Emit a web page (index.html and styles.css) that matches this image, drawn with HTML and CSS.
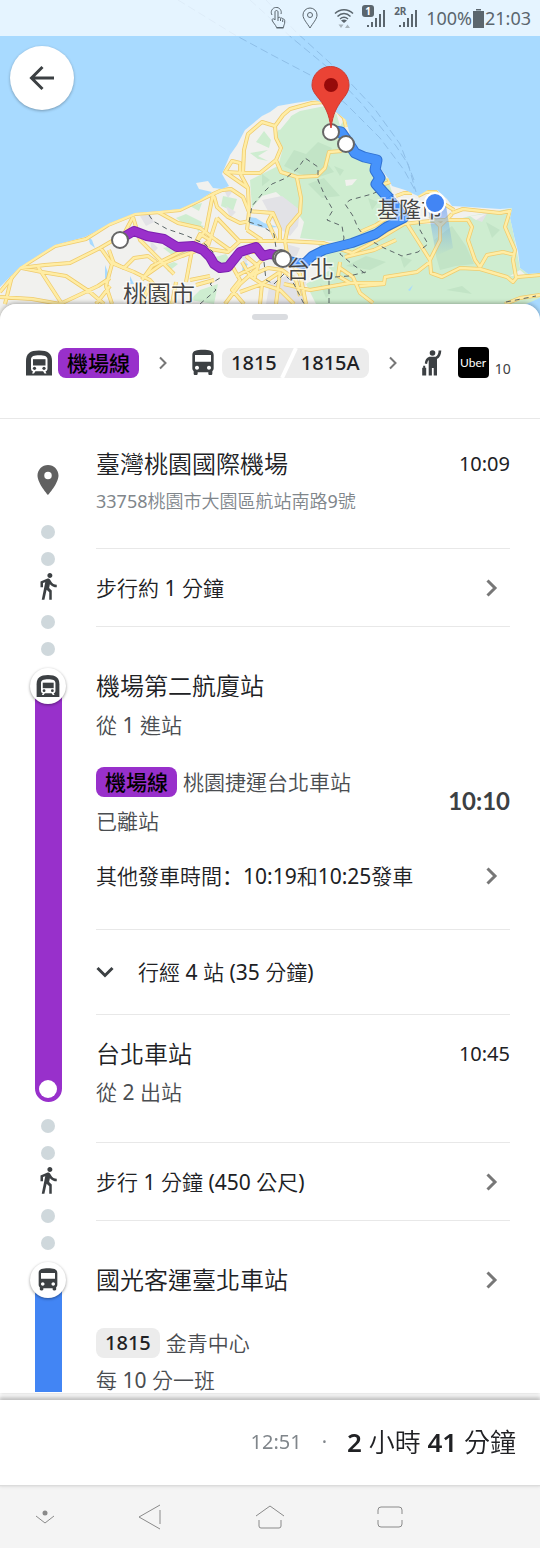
FILE: index.html
```html
<!DOCTYPE html>
<html lang="zh-Hant">
<head>
    <meta charset="UTF-8">
    <meta name="viewport" content="width=device-width, initial-scale=1.0">
    <title>路線詳細資料</title>
    <link rel="stylesheet" href="styles.css">
</head>
<body>
    <!-- Shared icons -->
    <svg class="sprite" aria-hidden="true">
        <symbol id="i-bus" viewBox="0 0 24 24">
            <path d="M4 16c0 .88.39 1.67 1 2.22V20c0 .55.45 1 1 1h1c.55 0 1-.45 1-1v-1h8v1c0 .55.45 1 1 1h1c.55 0 1-.45 1-1v-1.78c.61-.55 1-1.34 1-2.22V6c0-3.5-3.58-4-8-4s-8 .5-8 4v10zm3.5 1c-.83 0-1.5-.67-1.5-1.5S6.67 14 7.5 14s1.5.67 1.5 1.5S8.33 17 7.5 17zm9 0c-.83 0-1.5-.67-1.5-1.5s.67-1.5 1.5-1.5 1.5.67 1.5 1.5-.67 1.5-1.5 1.5zm1.5-6H6V6h12v5z"/>
        </symbol>
        <symbol id="i-train" viewBox="0 0 32 32">
            <path d="M3 28.500V14C3 6.500 7 3.500 16 3.500s13 3 13 10.500v14.500z"/>
            <path fill="#fff" d="M8 12.500c0-3.500 3-4.300 8.200-4.300s8.300.8 8.300 4.300v9c0 1.500-.8 2.600-2 2.900l1 2h-2l-1.400-2.200h-7.700L11 26.400H9l1-2c-1.200-.3-2-1.400-2-2.900z"/>
            <path d="M10 12.200h12.500v6.300H10z"/>
            <circle cx="11.500" cy="21.300" r="1.600"/>
            <circle cx="21" cy="21.300" r="1.600"/>
        </symbol>
        <symbol id="i-walk" viewBox="0 0 24 24">
            <path d="M13.500 5.500c1.100 0 2-.9 2-2s-.9-2-2-2-2 .9-2 2 .9 2 2 2zM9.800 8.900L7 23h2.100l1.800-8 2.100 2v6h2v-7.500l-2.100-2 .6-3C14.800 12 16.800 13 19 13v-2c-1.900 0-3.500-1-4.300-2.400l-1-1.600c-.4-.6-1-1-1.700-1-.3 0-.5.1-.8.1L6 8.300V13h2V9.600l1.800-.7"/>
        </symbol>
        <symbol id="i-hail" viewBox="0 0 32 32">
            <circle cx="15.500" cy="6" r="2.800"/>
            <path d="M24.300 3.400l-2.700.2c0 3-1 5-3 6.200h-5.200c-3 0-5 2.200-5.600 6.700l2.300.5c.3-2 .8-3.200 1.600-4v15.500h3.200V21h1.800v7.500H20V12c2.800-1.500 4.200-4.500 4.300-8.600z"/>
            <path d="M5.200 20.700h1v-2h2v2h1v7.800h-4z"/>
        </symbol>
        <symbol id="i-pin" viewBox="0 0 24 24">
            <path d="M12 2C8.130 2 5 5.130 5 9c0 5.250 7 13 7 13s7-7.750 7-13c0-3.870-3.130-7-7-7zm0 9.500a2.500 2.500 0 010-5 2.500 2.500 0 010 5z"/>
        </symbol>
        <symbol id="i-next" viewBox="0 0 12 18">
            <path d="M1.500 1.500L9 9l-7.500 7.500" fill="none" stroke="currentColor" stroke-width="3"/>
        </symbol>
        <symbol id="i-sep" viewBox="0 0 8 14">
            <path d="M1 1.500L6.500 7 1 12.500" fill="none" stroke="currentColor" stroke-width="2"/>
        </symbol>
        <symbol id="i-signal" viewBox="0 0 20 18">
            <path d="M1 16h2v2H1zM5 13h2v5H5zM9 9h2v9H9zM13 5h2v13h-2zM17 1h2v17h-2z"/>
        </symbol>
    </svg>

    <header class="map">
        <svg class="map-canvas" viewBox="0 0 540 320" preserveAspectRatio="xMidYMin slice" role="img" aria-label="路線地圖">
            <defs>
                <path id="land" d="M0 287L20 267 42 253 55 245 85 237 93 233 110 223 135 213 160 211 180 209 200 200 212 192 199 189 196 183 208 181 213 188 222 189 229 186 222 174 230 155 237 145 245 130 262 116 270 112 278 106 295 103 315 100 325 104 337 113 346 120 350 135 350 142 357 152 372 157 380 168 388 178 392 186 405 190 418 196 428 190 437 190 447 199 452 206 470 207 500 209 512 208 510 218 514 236 518 252 520 268 528 274 540 273V320H0z"/>
                <g id="roads">
                    <path d="M0 292L20 268 55 246 86 239 108 225 135 214 160 212 180 210 213 194 222 190 231 189 243 197 249 212 247 230"/>
                    <path d="M20 268L45 265 70 263 100 248 124 234 133 217M22 268L42 272 66 276 90 292 104 304M38 267L62 304M0 297L32 299 60 304M12 276L5 304M60 304L98 286 110 278M100 247L112 264 106 286 112 304M110 286L96 304M109 250L114 264 134 272 150 280 170 304"/>
                    <path d="M133 217L140 240 160 260 174 274M142 280L152 266 176 254 192 246M112 262L124 268 134 258 148 256 156 262M158 212L178 223 200 228 216 240 230 250M142 278L162 264 182 256 204 248 228 252 240 241 287 241 323 243 352 253"/>
                    <path d="M213 194L206 230 196 242 200 234 210 240 202 246M214 196L217 207 228 217 240 223 250 221M217 218L208 246M217 218L240 242M192 250L186 282M196 285L214 280M225 304L240 284 258 268M230 262L240 280 232 290 244 304M150 283L142 304M176 282L172 304M190 280L210 276"/>
                    <path d="M346 127L344 118 333 106 324 102 312 103 290 109 283 115 275 126 262 122 248 134 244 150 243 173 225 172 232 161 240 163 240 173 248 188 249 213M225 172L248 188M275 126L276 138 281 148 276 160 281 172 297 177 317 176 325 168 329 152 342 151M243 173L260 173 276 160"/>
                    <path d="M297 178L301 198 300 213 288 227 285 241M248 211L273 213 280 229 280 241M272 214L268 222 276 240M247 230L262 240M285 241L288 260 300 274 306 304M240 252L262 252 284 254M242 262L250 276 262 284 260 304M236 276L256 266 266 256M250 276L268 268 282 270 296 280 300 296M240 292L262 284 280 272M280 272L276 304M262 284L280 290 294 304M246 256L258 266 254 280M284 284L310 290 350 283 383 283"/>
                    <path d="M340 268L353 277 360 293 373 303M352 253L366 246 384 236 404 224 420 222 442 220 468 220 472 227 468 240 475 260 480 267M345 257L374 250 396 240M360 232L376 225 390 216M340 262L338 276 350 283"/>
                    <path d="M406 222L430 260 431 273 442 277 460 268 480 269 507 277 513 282 517 277 540 275M430 260L440 240 440 224 432 220M430 262L417 272 385 277 384 284 360 286M480 267L487 255 503 252 515 255M452 213L463 209 500 213 510 211 505 227 515 250 513 260 516 277M396 196L404 193 412 193M418 196L426 192 436 192 444 204 454 210M388 178L390 182 384 184M430 216L440 226 452 214M505 304L520 298 540 295"/>
                </g>
                <linearGradient id="beam" x1="0" y1="0" x2="0" y2="1">
                    <stop offset="0" stop-color="#4285f4" stop-opacity=".5"/>
                    <stop offset="1" stop-color="#4285f4" stop-opacity="0"/>
                </linearGradient>
                <clipPath id="shore"><use href="#land"/></clipPath>
            </defs>
            <rect width="540" height="320" fill="#a8daff"/>
            <g fill="none" stroke="#8fbfe8" stroke-dasharray="8 4">
                <path d="M178 0L235 35 272 55 312 76 346 104 380 138 404 170 416 192M250 0L292 38 326 66 362 104 396 146 408 164 416 192M266 0L296 32 340 72 374 108 400 144 414 180"/>
            </g>
            <use href="#land" fill="#f1f1ee"/>
            <g clip-path="url(#shore)">
                <g fill="#ceedd0">
                    <path d="M284 120L300 111 325 106 342 118 348 142 358 156 372 160 388 180 392 192 384 206 396 222 376 234 340 242 318 240 300 238 304 222 292 206 276 192 262 196 252 208 250 180 262 174 278 166 283 148 276 134z"/>
                    <path d="M318 244L352 240 384 226 404 224 440 224 470 216 512 208 514 236 520 268 540 273V304H316L306 284 330 270z"/>
                    <path d="M256 142L264 131 271 140 269 148zM250 153L268 150 258 156 268 161 258 159zM223 196L237 199 233 211 221 206zM190 206L202 203 199 211zM176 218L186 214 202 222 200 228 184 224zM163 248L181 244 186 252 176 258zM166 265L174 262 178 264 168 272zM212 258L226 254 230 260 222 268zM190 300L200 290 218 284 214 304zM196 224L204 226 198 232z"/>
                </g>
                <g fill="#c2e4c6">
                    <path d="M284 166L294 150 306 154 318 142 332 148 326 162 334 172 316 178 300 174zM308 184L324 178 340 196 322 198zM334 166L344 170 340 176zM346 266L366 256 386 262 370 270zM434 240L452 226 466 246 474 264 456 266 440 270 436 256zM486 222L500 230 492 238zM400 256L412 260 404 268zM446 290L462 286 472 294zM320 284L332 292 326 298zM262 174L270 180 262 186zM330 128L338 132 332 138zM368 198L378 202 372 210z"/>
                </g>
                <g fill="#e2e2e6">
                    <path d="M262 200L282 196 300 210 298 226 290 236 276 226zM270 282L292 274 306 282 302 304 266 304zM140 216L150 214 154 222 146 226zM236 250L250 254 246 264zM292 262L306 266 304 276zM226 206L236 212 230 218zM150 240L158 248 152 254zM222 186L232 192 228 198zM396 200L410 202 404 214zM472 218L488 212 482 222zM286 244L300 248 294 262z"/>
                </g>
                <path fill="#f1f1ee" d="M274 128L284 116 294 110 290 118 280 130zM345 180L357 179 352 185 346 186zM336 112L344 120 340 126zM470 216L486 214 476 220zM510 276L520 270 526 275z"/>
                <path fill="#a8daff" d="M249 217L256 218 264 223 278 227 264 228 249 224zM88 236L92 240 95 248 90 244zM105 265L109 275 107 289 105 280zM130 276L134 284 130 284zM243 262L248 264 242 274zM408 290L413 285 410 291zM526 304L540 298V320H526z"/>
                <g fill="none" stroke-linejoin="round">
                    <use href="#roads" stroke="#efcb6d" stroke-width="4"/>
                    <use href="#roads" stroke="#ffeda5" stroke-width="2.500"/>
                </g>
                <g fill="none" stroke="#5c6668" stroke-dasharray="5 4">
                    <path d="M149 215L153 221 167 229 185 235 205 244 213 252 211 260M249 222L252 206 262 194 272 184 286 178 298 168 305 158 318 167 318 180 325 196 333 210 327 220 342 226 344 238 340 254 352 264 366 274M249 222L262 226 274 234 276 248M386 188L372 194 350 200 345 204 353 216 358 228 366 238M366 238L384 248 402 256 418 252 428 244 420 230 419 218M335 277L349 276 366 272M200 304L216 290 210 284 220 278M264 262L266 280 274 284 284 274 294 284 304 304M329 280V304M506 302L536 296"/>
                </g>
            </g>
            <path d="M428 208L446 206 453 248 436 256z" fill="url(#beam)"/>
            <g fill="none" stroke-linejoin="round">
                <path stroke="#7c1fb0" stroke-width="10" d="M120 240L127 235 134 231 147 236 164 239 177 247 193 246 203 250 210 257 214 264 220 268 228 267 236 257 240 252 256 247 263 256 270 254 282 256"/>
                <path stroke="#9a30cb" stroke-width="8" d="M120 240L127 235 134 231 147 236 164 239 177 247 193 246 203 250 210 257 214 264 220 268 228 267 236 257 240 252 256 247 263 256 270 254 282 256"/>
                <path stroke="#2f70d0" stroke-width="11" d="M334 131L341 132 348 142 355 153 364 157 377 160 375 170 380 178 376 184 384 193 390 199"/>
                <path stroke="#4793fb" stroke-width="9" d="M334 131L341 132 348 142 355 153 364 157 377 160 375 170 380 178 376 184 384 193 390 199"/>
                <path stroke="#2f70d0" stroke-width="10" d="M388 198L394 204 404 218 386 227 376 234 352 243 324 250 312 256 304 264 282 260"/>
                <path stroke="#4793fb" stroke-width="8" d="M388 198L394 204 404 218 386 227 376 234 352 243 324 250 312 256 304 264 282 260"/>
            </g>
            <g class="map-label">
                <text x="123" y="303" font-size="24">桃園市</text>
                <text x="286" y="278" font-size="24">台北</text>
                <text x="377" y="217" font-size="22">基隆市</text>
            </g>
            <g fill="#fff" stroke="#666" stroke-width="2">
                <circle cx="120" cy="240" r="8"/>
                <circle cx="281" cy="258" r="8"/>
                <circle cx="283" cy="259" r="8"/>
                <circle cx="346" cy="144" r="8"/>
                <circle cx="331" cy="132" r="8"/>
            </g>
            <circle cx="435" cy="203" r="10" fill="#4285f4" stroke="#fff" stroke-width="2"/>
            <path fill="#ea4335" stroke="#cf3a2f" d="M331 128c-2-15-6-21-11-28-4-5-8-9-8-15a18.500 18.500 0 0137 0c0 6-3 10-7 15-5 7-9 13-11 28z"/>
            <circle cx="331" cy="85" r="7" fill="#960a0a"/>
        </svg>

        <div class="status-bar">
            <svg width="16" height="22" viewBox="0 0 16 22" fill="none" stroke="currentColor">
                <path d="M2 8a5 5 0 119-1M5 13V5c0-2 3-2 3 0v6c1-1 2.500-1 2.500.5 1-1 2.200-.6 2.200.8 1-.6 2 0 2 1.200V16c0 1-1 2-1.200 4.500H6.500C6 18 3 16 2 13c0-1 1.500-2 3 0M6.500 21h7M8 11v3M10.500 12v2M12.700 13v2"/>
            </svg>
            <svg class="place" width="16" height="22" viewBox="0 0 16 22" fill="none" stroke="currentColor">
                <path d="M8 21C5 16 1 12 1 8a7 7 0 0114 0c0 4-4 8-7 13z"/>
                <circle cx="8" cy="8" r="2.500"/>
            </svg>
            <svg width="20" height="20" viewBox="0 0 20 20" fill="none" stroke="currentColor" stroke-width="1.500">
                <path d="M1 5.500c5-5 13-5 18 0M3.500 8.500c4-4 9-4 13 0M6 11c3-2.500 5-2.500 8 0"/>
                <path d="M7 12.500c2-1.300 4-1.300 6 0L10 15z" fill="currentColor" stroke="none"/>
                <path d="M4.500 16.500h5L7 20zM11 20h5l-2.500-3.500z" fill="#a9b4bc" stroke="none"/>
            </svg>
            <span class="sim"><b class="sim-badge">1</b><svg width="20" height="18"><use href="#i-signal"/></svg></span>
            <span class="sim"><b class="sim-tag">2R</b><svg width="20" height="18"><use href="#i-signal"/></svg></span>
            <span class="battery">100%<svg width="11" height="19" viewBox="0 0 11 19"><path d="M3 0h5v1.500H3zM0 2h11v17H0z"/></svg>21:03</span>
        </div>

        <button class="back" aria-label="返回">
            <svg width="26" height="26" viewBox="0 0 26 26" fill="none" stroke="currentColor" stroke-width="3">
                <path d="M13.500 2L2.500 13l11 11M2.500 13H25"/>
            </svg>
        </button>
    </header>

    <main class="sheet">
        <div class="handle"></div>

        <section class="summary">
            <span class="leg">
                <svg class="icon-lg"><use href="#i-train"/></svg>
                <span class="pill pill-metro">機場線</span>
            </span>
            <svg class="sep"><use href="#i-sep"/></svg>
            <span class="leg">
                <svg class="icon-lg"><use href="#i-bus"/></svg>
                <span class="pill">1815<svg class="slash" viewBox="0 0 18 30"><path d="M16 0L2 30" stroke="#fff" stroke-width="4"/></svg>1815A</span>
            </span>
            <svg class="sep"><use href="#i-sep"/></svg>
            <span class="leg">
                <svg class="icon-lg"><use href="#i-hail"/></svg>
                <span class="uber">Uber</span>
                <small>10</small>
            </span>
        </section>

        <ol class="steps">
            <li class="step">
                <div class="rail rail-origin">
                    <svg class="pin"><use href="#i-pin"/></svg>
                    <i class="dot"></i>
                </div>
                <div class="info origin">
                    <div class="row">
                        <h2>臺灣桃園國際機場</h2>
                        <time>10:09</time>
                    </div>
                    <p class="address">33758桃園市大園區航站南路9號</p>
                </div>
            </li>

            <li class="step">
                <div class="rail rail-walk">
                    <i class="dot"></i>
                    <svg class="walker"><use href="#i-walk"/></svg>
                    <i class="dot"></i>
                </div>
                <button class="info walk">步行約 1 分鐘<svg class="next"><use href="#i-next"/></svg></button>
            </li>

            <li class="step">
                <div class="rail rail-ride">
                    <i class="dot"></i>
                    <span class="badge"><svg><use href="#i-train"/></svg></span>
                    <span class="line line-metro"><i class="stop"></i></span>
                    <i class="dot"></i>
                </div>
                <div class="info ride">
                    <h2>機場第二航廈站</h2>
                    <p class="note">從 1 進站</p>
                    <div class="row departure">
                        <div>
                            <p class="route"><span class="pill pill-metro">機場線</span>桃園捷運台北車站</p>
                            <p>已離站</p>
                        </div>
                        <time class="depart-time">10:10</time>
                    </div>
                    <button class="others"><span>其他發車時間<span class="colon" lang="zh-Hans">：</span>10:19和10:25發車</span><svg class="next"><use href="#i-next"/></svg></button>
                    <button class="stops">
                        <svg viewBox="0 0 18 12"><path d="M1.500 2L9 9.500 16.500 2" fill="none" stroke="currentColor" stroke-width="3"/></svg>
                        行經 4 站 (35 分鐘)
                    </button>
                    <div class="arrival">
                        <div class="row">
                            <h2>台北車站</h2>
                            <time>10:45</time>
                        </div>
                        <p>從 2 出站</p>
                    </div>
                </div>
            </li>

            <li class="step">
                <div class="rail rail-walk">
                    <i class="dot"></i>
                    <svg class="walker"><use href="#i-walk"/></svg>
                    <i class="dot"></i>
                </div>
                <button class="info walk">步行 1 分鐘 (450 公尺)<svg class="next"><use href="#i-next"/></svg></button>
            </li>

            <li class="step">
                <div class="rail rail-ride rail-open">
                    <i class="dot"></i>
                    <span class="badge"><svg><use href="#i-bus"/></svg></span>
                    <span class="line line-bus"></span>
                </div>
                <div class="info ride">
                    <div class="row">
                        <h2>國光客運臺北車站</h2>
                        <svg class="next"><use href="#i-next"/></svg>
                    </div>
                    <p class="route bus-route"><span class="pill">1815</span>金青中心</p>
                    <p class="interval">每 10 分一班</p>
                </div>
            </li>
        </ol>
    </main>

    <footer class="total">
        <span class="total-time">12:51</span>
        <span class="total-time">·</span>
        <strong><b>2</b> 小時 <b>41</b> 分鐘</strong>
    </footer>

    <nav class="nav">
        <button aria-label="收合">
            <svg width="20" height="14" viewBox="0 0 20 14"><circle cx="10" cy="3" r="2.500" fill="currentColor" stroke="none"/><path d="M1 6l9 7 9-7"/></svg>
        </button>
        <button aria-label="返回">
            <svg width="24" height="26" viewBox="0 0 24 26"><path d="M22 1L1 13l21 12M22 6v14"/></svg>
        </button>
        <button aria-label="主畫面">
            <svg width="30" height="26" viewBox="0 0 30 26"><path d="M1 12L15 2l14 10M4 16v6q0 2 2 2h18q2 0 2-2v-6"/></svg>
        </button>
        <button aria-label="最近使用">
            <svg width="28" height="22" viewBox="0 0 28 22"><path d="M2 8V4q0-3 3-3h18q3 0 3 3v4M2 14v4q0 3 3 3h18q3 0 3-3v-4"/></svg>
        </button>
    </nav>
</body>
</html>
```
FILE: styles.css
```css
:root {
    --text: #202124;
    --text-soft: #4a4d51;
    --muted: #80868b;
    --icon: #3c4043;
    --line: #e8e8e8;
    --metro: #9830cb;
    --bus: #4285f4;
    --dot: #cfd8dc;
}

* {
    margin: 0;
    padding: 0;
    box-sizing: border-box;
}

body {
    font-family: "Noto Sans", "Noto Sans CJK TC DemiLight", "Noto Sans CJK TC", sans-serif;
    font-size: 21px;
    line-height: 28px;
    color: var(--text);
    background: #fff;
    height: 100vh;
    display: flex;
    flex-direction: column;
}

button {
    border: none;
    background: none;
    font: inherit;
    color: inherit;
    text-align: left;
}

svg {
    flex: none;
    fill: currentColor;
}

.sprite {
    position: absolute;
    width: 0;
    height: 0;
}

/* Map */
.map {
    position: relative;
    flex: none;
}

.map-canvas {
    display: block;
    width: 100%;
    height: 320px;
}

.map-label {
    fill: #444;
    stroke: rgba(255,255,255,0.6);
    stroke-width: 3px;
    paint-order: stroke;
}

.status-bar {
    position: absolute;
    top: 0;
    left: 0;
    right: 0;
    height: 36px;
    padding-right: 9px;
    display: flex;
    align-items: center;
    justify-content: flex-end;
    gap: 8px;
    background: rgba(255,255,255,0.7);
    color: #5b666e;
    font-size: 18px;
}

.place {
    margin: 0 8px;
}

.status-bar svg[fill="none"] {
    fill: none;
}

.sim {
    position: relative;
    padding-left: 4px;
    display: flex;
}

.sim-badge,
.sim-tag {
    position: absolute;
    left: 0;
    top: -4px;
    font-size: 10px;
    line-height: 12px;
    font-weight: 700;
}

.sim-badge {
    width: 12px;
    border-radius: 3px;
    background: #5b666e;
    color: #fff;
    text-align: center;
}

.battery {
    display: flex;
    align-items: center;
    gap: 1px;
}

.back {
    position: absolute;
    top: 46px;
    left: 10px;
    width: 64px;
    height: 64px;
    border-radius: 50%;
    background: #fff;
    box-shadow: 0 1px 3px rgba(0,0,0,0.3);
    color: var(--icon);
    display: flex;
    align-items: center;
    justify-content: center;
}

.back svg {
    fill: none;
}

/* Sheet */
.sheet {
    position: relative;
    flex: 1;
    min-height: 0;
    margin-top: -16px;
    border-radius: 16px 16px 0 0;
    background: #fff;
    box-shadow: 0 -1px 4px rgba(0,0,0,0.3);
    overflow-y: auto;
    scrollbar-width: none;
}

.handle {
    width: 36px;
    height: 6px;
    margin: 10px auto 0;
    border-radius: 3px;
    background: #dadce0;
}

.summary {
    display: flex;
    align-items: center;
    gap: 20px;
    height: 99px;
    padding: 0 23px 13px;
    border-bottom: 1px solid var(--line);
}

.leg {
    display: flex;
    align-items: center;
    gap: 3px;
    color: var(--icon);
}

.icon-lg {
    width: 32px;
    height: 32px;
}

.sep {
    width: 8px;
    height: 14px;
    color: #777;
}

.pill {
    display: inline-flex;
    align-items: center;
    gap: 3px;
    height: 30px;
    padding: 0 9px;
    border-radius: 8px;
    background: #ececec;
    color: var(--text);
    font-family: "Noto Sans", "Noto Sans CJK TC", sans-serif;
    font-size: 20px;
    font-weight: 500;
}

.pill-metro {
    background: var(--metro);
    color: #000;
    font-size: 21px;
}

.slash {
    width: 18px;
    height: 30px;
}

.uber {
    width: 31px;
    height: 31px;
    margin-left: 6px;
    border-radius: 4px;
    background: #000;
    color: #fff;
    font-family: Lato, sans-serif;
    font-size: 12px;
    line-height: 31px;
    text-align: center;
}

.leg small {
    align-self: flex-end;
    margin-left: 3px;
    font-size: 14px;
    line-height: 20px;
}

/* Steps */
.steps {
    list-style: none;
}

.step {
    display: grid;
    grid-template-columns: 96px 1fr;
    padding-right: 30px;
}

.rail {
    display: flex;
    flex-direction: column;
    align-items: center;
    color: var(--icon);
}

.dot {
    flex: none;
    width: 14px;
    height: 14px;
    border-radius: 50%;
    background: var(--dot);
}

.rail-origin {
    padding-top: 43px;
    gap: 27px;
    color: #616161;
}

.pin {
    width: 36px;
    height: 36px;
}

.rail-walk {
    padding-top: 3px;
}

.walker {
    width: 30px;
    height: 30px;
    margin: 5px 0 14px;
}

.rail-ride {
    padding: 13px 0 10px;
}

.rail-open {
    padding-bottom: 0;
}

.badge {
    z-index: 1;
    flex: none;
    width: 36px;
    height: 36px;
    margin-top: 12px;
    border-radius: 50%;
    background: #fff;
    box-shadow: 0 1px 3px rgba(0,0,0,0.4);
    display: flex;
    align-items: center;
    justify-content: center;
}

.badge svg {
    width: 28px;
    height: 28px;
}

.line {
    flex: 1;
    width: 27px;
    margin-top: -18px;
    display: flex;
    align-items: flex-end;
    justify-content: center;
}

.line-metro {
    margin-bottom: 17px;
    padding-bottom: 4px;
    border-radius: 0 0 14px 14px;
    background: var(--metro);
}

.line-bus {
    background: var(--bus);
}

.stop {
    width: 18px;
    height: 18px;
    border-radius: 50%;
    background: #fff;
}

.info {
    align-self: start;
    border-bottom: 1px solid var(--line);
}

.row {
    display: flex;
    align-items: center;
    justify-content: space-between;
}

h2 {
    font-size: 24px;
    line-height: 32px;
    font-weight: 400;
}

time {
    font-size: 20px;
}

p {
    color: var(--text-soft);
}

.origin {
    padding: 29px 0 33px;
}

.address {
    margin-top: 7px;
    font-size: 18px;
    color: var(--muted);
}

.next {
    width: 12px;
    height: 18px;
    margin-right: 12px;
    color: #777;
}

.walk {
    display: flex;
    align-items: center;
    justify-content: space-between;
    height: 78px;
}

.ride {
    padding-top: 41px;
}

.note {
    margin-top: 9px;
}

.departure {
    margin-top: 28px;
}

.route {
    display: flex;
    align-items: center;
    gap: 6px;
    margin-bottom: 10px;
}

.depart-time {
    font-family: Lato, sans-serif;
    font-size: 24px;
    font-weight: 700;
    color: var(--icon);
}

.others {
    display: flex;
    align-items: center;
    justify-content: space-between;
    width: 100%;
    padding: 27px 0 39px;
    border-bottom: 1px solid var(--line);
}

.colon {
    font-family: "Noto Sans CJK SC", sans-serif;
    line-height: 1;
}

.stops {
    display: flex;
    align-items: center;
    gap: 24px;
    width: 100%;
    height: 85px;
    border-bottom: 1px solid var(--line);
}

.stops svg {
    width: 18px;
    height: 12px;
    color: var(--icon);
}

.arrival {
    padding: 23px 0 36px;
}

.arrival p {
    margin-top: 8px;
}

.bus-route {
    margin-top: 32px;
}

.interval {
    line-height: 24px;
}

.step:last-child .info {
    border-bottom: none;
}

/* Total */
.total {
    position: relative;
    display: flex;
    align-items: center;
    justify-content: flex-end;
    gap: 20px;
    height: 86px;
    flex: none;
    padding: 0 24px 2px;
    margin-top: 7px;
    background: #fff;
    border-bottom: 1px solid #dcdcdc;
    box-shadow: 0 -2px 4px 1px rgba(0,0,0,0.25);
}

.total-time {
    font-size: 20px;
    color: var(--muted);
}

.total strong {
    font-size: 26px;
    font-weight: 400;
}

.total b {
    font-weight: 600;
}

.nav {
    display: grid;
    grid-template-columns: 3fr 4fr 4fr 4fr 3fr;
    flex: none;
    height: 62px;
    background: #f4f4f4;
}

.nav button {
    display: flex;
    align-items: center;
    justify-content: center;
    color: #8a8a8a;
}

.nav svg {
    fill: none;
    stroke: currentColor;
}
```
